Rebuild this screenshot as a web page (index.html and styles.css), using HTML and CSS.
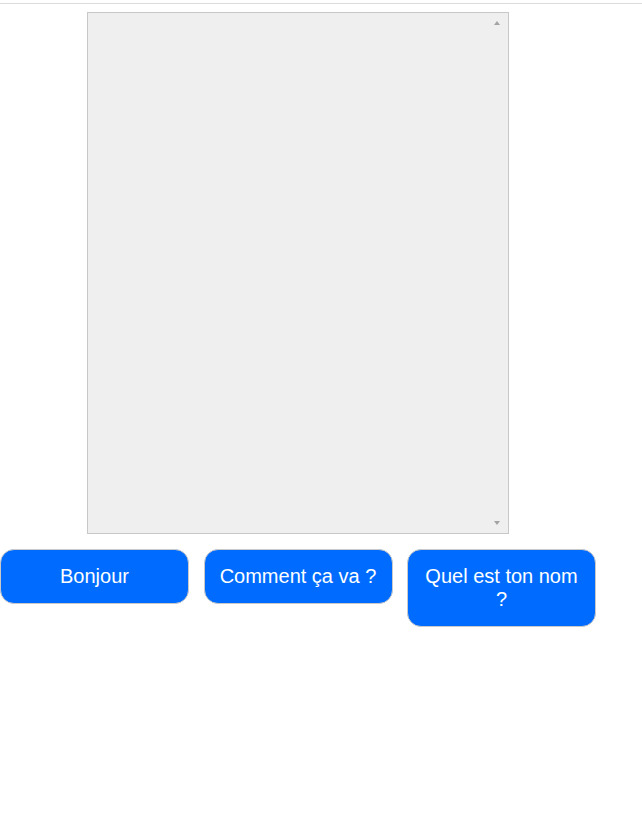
FILE: index.html
```html
<!DOCTYPE html>
<html lang="fr">
<head>
<meta charset="utf-8">
<title>Chat</title>
<link rel="stylesheet" href="styles.css">
</head>
<body>
<div class="topline"></div>
<div class="log">
  <span class="arrow arrow-up"></span>
  <span class="arrow arrow-down"></span>
</div>
<div class="choices">
  <button class="choice">Bonjour</button>
  <button class="choice">Comment ça va ?</button>
  <button class="choice">Quel est ton nom ?</button>
</div>
</body>
</html>
```
FILE: styles.css
```css
html, body {
  margin: 0;
  padding: 0;
  background: #ffffff;
  font-family: "Liberation Sans", Arial, sans-serif;
}
body {
  padding-top: 3px;
}
.topline {
  height: 1px;
  background: #dcdcdc;
}
.log {
  position: relative;
  box-sizing: border-box;
  width: 422px;
  height: 522px;
  margin: 8px 0 0 87px;
  background: #efefef;
  border: 1px solid #c8c8c8;
}
.arrow {
  position: absolute;
  right: 8px;
  width: 0;
  height: 0;
  border-left: 3.5px solid transparent;
  border-right: 3.5px solid transparent;
}
.arrow-up {
  top: 8px;
  border-bottom: 4px solid #a3a3a3;
}
.arrow-down {
  bottom: 8px;
  border-top: 4px solid #a3a3a3;
}
.choices {
  display: flex;
  align-items: flex-start;
  gap: 14.5px;
  margin-top: 15px;
}
.choice {
  box-sizing: border-box;
  width: 189px;
  padding: 15px 10px;
  border: 1px solid #c9c9c9;
  border-radius: 14px;
  background: #006cff;
  color: #ffffff;
  font-family: "Liberation Sans", Arial, sans-serif;
  font-size: 20px;
  line-height: 23px;
  text-align: center;
}
```
